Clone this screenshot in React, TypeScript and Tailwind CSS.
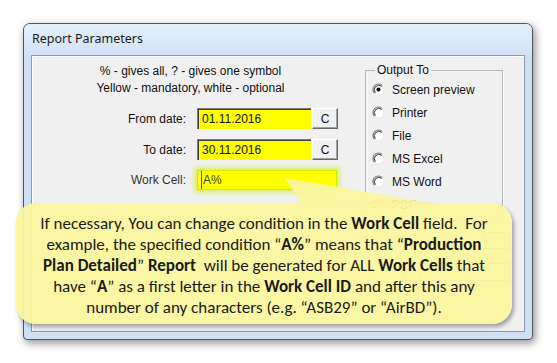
import React from "react";

function Radio({ checked }: { checked?: boolean }) {
  return (
    <svg width="13" height="13" viewBox="0 0 13 13" className="shrink-0">
      <circle cx="6.5" cy="6.5" r="5.5" fill="#ffffff" />
      <path d="M10.4 2.6 A5.5 5.5 0 0 0 2.6 10.4" fill="none" stroke="#7a7a7a" strokeWidth="1.2" />
      <path d="M9.6 3.4 A4.4 4.4 0 0 0 3.4 9.6" fill="none" stroke="#303030" strokeWidth="1" />
      <path d="M2.6 10.4 A5.5 5.5 0 0 0 10.4 2.6" fill="none" stroke="#e8e8e8" strokeWidth="1" />
      {checked && <circle cx="6.5" cy="6.5" r="2" fill="#000" />}
    </svg>
  );
}

function RadioRow({ label, checked }: { label: string; checked?: boolean }) {
  return (
    <div className="flex items-center h-[23px] gap-[7px]">
      <Radio checked={checked} />
      <span>{label}</span>
    </div>
  );
}

function CButton() {
  return (
    <div className="ml-[1px] w-[26px] h-[21px] flex items-center justify-center bg-[#f0f0f0] border-t border-l border-t-white border-l-white border-r border-b border-r-[#696969] border-b-[#696969] shadow-[inset_-1px_-1px_0_#a0a0a0]">
      C
    </div>
  );
}

export default function App() {
  const win = { fontFamily: '"Liberation Sans", Arial, sans-serif' };
  const callout = { fontFamily: 'Carlito, Lato, "Open Sans", sans-serif' };
  return (
    <div className="relative w-[557px] h-[363px] bg-white overflow-hidden pl-[23px] pt-[23px]">
      <div className="w-[510px] h-[317px] flex flex-col rounded-t-[7px] rounded-b-[4px] border border-[#50555c] bg-[#cfe0f5] shadow-[2px_3px_9px_rgba(0,0,0,0.45)]">
        <div
          className="h-[31px] shrink-0 flex items-center pl-[8px] rounded-t-[6px] bg-gradient-to-b from-[#e4eefb] to-[#d2e3f7] text-[12.5px] text-[#1b1b1b]"
          style={{ fontFamily: '"Noto Sans", "Open Sans", sans-serif' }}
        >
          Report Parameters
        </div>
        <div
          className="mx-[7px] h-[277px] shrink-0 border border-[#8d9aab] bg-[#f0f0f0] shadow-[inset_1px_1px_0_#ffffff] flex text-[12px] text-[#111]"
          style={win}
        >
          <div className="w-[317px] shrink-0 flex flex-col">
            <div className="pt-[7px] text-center leading-[17px]">
              <div>% - gives all, ? - gives one symbol</div>
              <div>Yellow - mandatory, white - optional</div>
            </div>
            <div className="mt-[11px] flex items-center h-[21px]">
              <div className="w-[154px] text-right">From date:</div>
              <div className="ml-[11px] w-[114px] h-[21px] bg-[#ffff00] border-t border-l border-[#7a7a7a] border-r-white border-b-white shadow-[inset_1px_1px_0_#404040] pl-[4px] flex items-center">
                01.11.2016
              </div>
              <CButton />
            </div>
            <div className="mt-[10px] flex items-center h-[21px]">
              <div className="w-[154px] text-right">To date:</div>
              <div className="ml-[11px] w-[114px] h-[21px] bg-[#ffff00] border-t border-l border-[#7a7a7a] border-r-white border-b-white shadow-[inset_1px_1px_0_#404040] pl-[4px] flex items-center">
                30.11.2016
              </div>
              <CButton />
            </div>
            <div className="mt-[10px] flex items-center h-[20px]">
              <div className="w-[154px] text-right text-[#333]">Work Cell:</div>
              <div className="ml-[11px] w-[140px] h-[20px] bg-[#ffff00] border border-[#d4e800] shadow-[0_0_4px_3px_rgba(215,240,80,0.75)] pl-[3px] flex items-center text-[#444]">
                <span className="border-l border-[#555] pl-[1px]">A%</span>
              </div>
            </div>
          </div>
          <div className="ml-[16px] w-[145px] shrink-0 flex flex-col">
            <fieldset className="mt-[7px] w-[138px] h-[158px] border border-[#b8b8b8] shadow-[1px_1px_0_#ffffff] pl-[6px] pt-[1px]">
              <legend className="ml-[3px] px-[2px] leading-[14px]">Output To</legend>
              <RadioRow label="Screen preview" checked />
              <RadioRow label="Printer" />
              <RadioRow label="File" />
              <RadioRow label="MS Excel" />
              <RadioRow label="MS Word" />
              <RadioRow label="PDF" />
            </fieldset>
            <div className="mt-[11px] self-end w-[26px] h-[17px] border border-[#9a9a9a] bg-white" />
            <div className="mt-[14px] ml-[38px] w-[107px] h-[18px] border border-[#9a9a9a] bg-white" />
          </div>
        </div>
      </div>

      {/* callout pointer */}
      <svg className="absolute left-[280px] top-[175px]" width="190" height="32" viewBox="0 0 190 32">
        <polygon points="5,3 23,31 170,31" fill="rgba(250,246,158,0.95)" />
      </svg>
      {/* callout */}
      <div
        className="absolute left-[16px] top-[203px] w-[496px] h-[121px] rounded-[20px] bg-[rgba(250,246,158,0.95)] shadow-[2px_3px_4px_rgba(0,0,0,0.35)] pt-[10px] text-center text-[17px] leading-[21px] text-[#1a1a1a] whitespace-pre"
        style={callout}
      >
        <div>
          If necessary, You can change condition in the <b>Work Cell</b> field.  For
        </div>
        <div>
          example, the specified condition “<b>A%</b>” means that “<b>Production</b>
        </div>
        <div>
          <b>Plan Detailed</b>” <b>Report</b>  will be generated for ALL <b>Work Cells</b> that
        </div>
        <div>
          have “<b>A</b>” as a first letter in the <b>Work Cell ID</b> and after this any
        </div>
        <div>number of any characters (e.g. “ASB29” or “AirBD”).</div>
      </div>
    </div>
  );
}
